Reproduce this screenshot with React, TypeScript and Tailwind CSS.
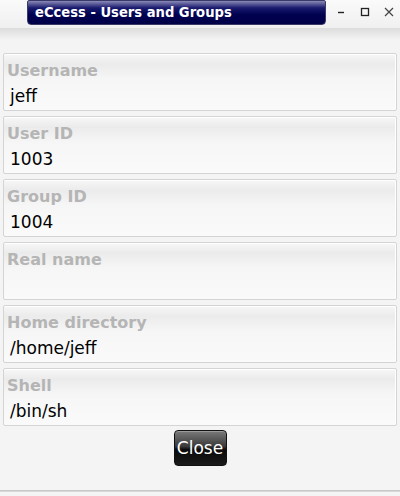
import React from 'react';

const fields = [
  { label: 'Username', value: 'jeff' },
  { label: 'User ID', value: '1003' },
  { label: 'Group ID', value: '1004' },
  { label: 'Real name', value: '' },
  { label: 'Home directory', value: '/home/jeff' },
  { label: 'Shell', value: '/bin/sh' },
];

const Field: React.FC<{ label: string; value: string }> = ({ label, value }) => (
  <div className="h-[58px] border border-[#d4d4d4] rounded-[2px] bg-[linear-gradient(to_bottom,#f7f7f7_0%,#ebebeb_18%,#f6f6f6_45%,#fafafa_100%)] shadow-[inset_0_1px_0_#ffffff,inset_-1px_0_0_#ffffff] flex flex-col">
    <div className="pl-[3px] pt-[7px] h-[32px] text-[16px] leading-[20px] font-bold text-[#b5b5b5]">{label}</div>
    <div className="pl-[6px] text-[17px] leading-[20px] text-black">{value}</div>
  </div>
);

export default function App() {
  return (
    <div className="w-[400px] h-[496px] bg-[#f4f4f4] flex flex-col overflow-hidden" style={{ fontFamily: '"DejaVu Sans", sans-serif' }}>
      <div className="h-[28px] bg-[linear-gradient(to_bottom,#fafafa,#f0f0f0)] flex items-start relative">
        <div className="ml-[27px] w-[299px] h-[25px] rounded-b-[4px] rounded-t-[2px] bg-[linear-gradient(to_bottom,#8a8ab8_0%,#1a1a6e_30%,#000050_60%,#000048_100%)] border border-[#3a3a6a] flex items-center pl-[7px]">
          <span className="text-white text-[14.6px] font-bold leading-none font-['DejaVu_Sans_Condensed',sans-serif]">eCcess - Users and Groups</span>
        </div>
        <div className="flex items-center ml-[10px] mt-[6px] gap-[14px] text-[#333]">
          <svg width="10" height="12" viewBox="0 0 10 12"><path d="M2 6.5h6" stroke="#222" strokeWidth="1.4" /></svg>
          <svg width="10" height="12" viewBox="0 0 10 12"><rect x="1.5" y="2.5" width="7" height="7" fill="none" stroke="#222" strokeWidth="1.3" /></svg>
          <svg width="10" height="12" viewBox="0 0 10 12"><path d="M1 2l8 8M9 2l-8 8" stroke="#444" strokeWidth="1.2" /></svg>
        </div>
      </div>
      <div className="h-[12px] bg-[linear-gradient(to_bottom,#dcdcdc,#f4f4f4)]" />
      <div className="flex flex-col gap-[5px] px-[3px] pt-[13px]">
        {fields.map((f) => (
          <Field key={f.label} {...f} />
        ))}
      </div>
      <div className="flex justify-center pt-[4px]">
        <button className="w-[53px] h-[36px] rounded-[4px] border border-[#111] bg-[linear-gradient(to_bottom,#7a7a7a_0%,#3a3a3a_45%,#0a0a0a_55%,#1a1a1a_100%)] text-white text-[17px] leading-none shadow-[inset_0_1px_0_#9a9a9a]">
          Close
        </button>
      </div>
      <div className="mt-auto mb-[4px] h-[2px] bg-[#d8d8d8] border-t border-[#c8c8c8]" />
    </div>
  );
}
